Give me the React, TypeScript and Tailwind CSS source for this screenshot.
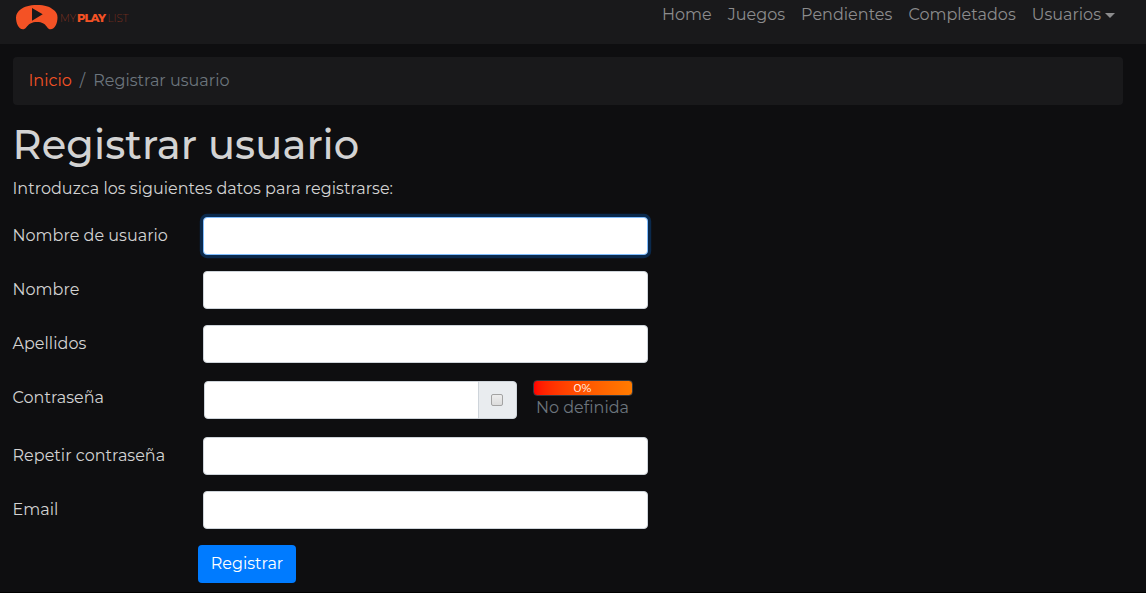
import type { ReactNode } from "react";

const links = ["Home", "Juegos", "Pendientes", "Completados"];

function Logo() {
  return (
    <svg width="116" height="28" viewBox="0 0 116 28" aria-label="MyPlayList">
      <path
        fillRule="evenodd"
        fill="#f45225"
        d="M21 2C29 2 33.500 3.500 37 6.500C40 8.500 41.500 11 41.500 14.500C41.500 20 39 26.300 34.500 26.300C30 26.300 31.500 19 21 19C10.500 19 11.500 26.300 7 26.300C2.500 26.300 0 20 0 14.500C0 11 2 8.500 4.500 6.500C8.500 3.500 13 2 21 2ZM16 4.900L16 17.700L26.700 11.300Z"
      />
      <g fill="#f45225" fontFamily="Montserrat, 'Open Sans', sans-serif" fontSize="12">
        <text x="44" y="18.500" fontWeight="200" opacity="0.6" textLength="16" lengthAdjust="spacingAndGlyphs">MY</text>
        <text x="61" y="18.500" fontWeight="800" textLength="29" lengthAdjust="spacing" fontSize="11.500">PLAY</text>
        <text x="91.500" y="18.500" fontWeight="200" opacity="0.6" textLength="21" lengthAdjust="spacingAndGlyphs">LIST</text>
      </g>
    </svg>
  );
}

function Row({ label, children }: { label: string; children: ReactNode }) {
  return (
    <div className="mb-4 flex">
      <label className="-ml-[0.5px] w-[190.5px] shrink-0 pt-[7px]">{label}</label>
      {children}
    </div>
  );
}

function Field({ focused = false, type = "text" }: { focused?: boolean; type?: string }) {
  return (
    <input
      type={type}
      className={
        focused
          ? "h-[38px] w-[445px] rounded border border-[#80bdff] bg-white px-3 text-[#495057] shadow-[0_0_0_3.2px_rgba(0,123,255,0.25)] outline-none"
          : "h-[38px] w-[445px] rounded border border-[#ced4da] bg-white px-3 text-[#495057] outline-none"
      }
    />
  );
}

export default function App() {
  return (
    <div className="h-[593px] overflow-hidden border-b border-black bg-[#0e0e10] font-['Montserrat','Open_Sans',sans-serif] text-base leading-6 tracking-[0.02px] text-[#d3d3d3]">
      <nav className="flex h-11 items-start justify-between bg-[#19191b] pl-4 pr-[23px]">
        <div className="pt-[3px]">
          <Logo />
        </div>
        <ul className="flex pt-[3px] text-[#8c8c8d]">
          {links.map((l) => (
            <li key={l} className="px-2">{l}</li>
          ))}
          <li className="flex items-center px-2">
            Usuarios
            <span className="ml-1 border-x-5 border-t-5 border-x-transparent border-t-[#8c8c8d]" />
          </li>
        </ul>
      </nav>

      <main className="pl-[13px] pr-[23px] pt-[13px]">
        <ol className="mb-4 flex h-12 rounded bg-[#19191b] pl-[15.5px] pr-4 pt-3 text-[#6c757d]">
          <li className="text-[#f45225]">Inicio</li>
          <li className="px-2">/</li>
          <li>Registrar usuario</li>
        </ol>

        <h1 className="-ml-[0.5px] mb-2 text-[40px] font-medium leading-[48px] tracking-[0.08px]">Registrar usuario</h1>
        <p className="-ml-[0.5px] mb-4">Introduzca los siguientes datos para registrarse:</p>

        <form>
          <Row label="Nombre de usuario"><Field focused /></Row>
          <Row label="Nombre"><Field /></Row>
          <Row label="Apellidos"><Field /></Row>
          <div className="mb-4 flex h-[42px]">
            <label className="-ml-[0.5px] w-[191.5px] shrink-0 pt-[7px]">Contraseña</label>
            <div className="mt-[2px] flex h-[38px] w-[313px]">
              <input type="password" className="min-w-0 flex-1 rounded-l border border-[#ced4da] bg-white px-3 text-[#495057] outline-none" />
              <span className="-ml-px flex w-[39px] items-center justify-center rounded-r border border-[#ced4da] bg-[#e9ecef] pr-px">
                <span className="size-3 rounded-[2px] border border-[#a3a3a3] bg-linear-to-b from-[#ededed] to-[#dcdcdc]" />
              </span>
            </div>
            <div className="ml-4 w-[100px] pt-px text-center">
              <div className="flex h-4 items-center justify-center rounded border border-[#343a40] bg-linear-to-r from-[#ff0000] to-[#ff7b00] pr-px text-xs leading-[14px] text-white">
                0%
              </div>
              <div className="-ml-px text-[#6c757d]">No definida</div>
            </div>
          </div>
          <Row label="Repetir contraseña"><Field type="password" /></Row>
          <Row label="Email"><Field type="email" /></Row>
          <button type="button" className="ml-[185px] h-[38px] w-[98px] rounded bg-[#007bff] pb-px text-white">
            Registrar
          </button>
        </form>
      </main>
    </div>
  );
}
